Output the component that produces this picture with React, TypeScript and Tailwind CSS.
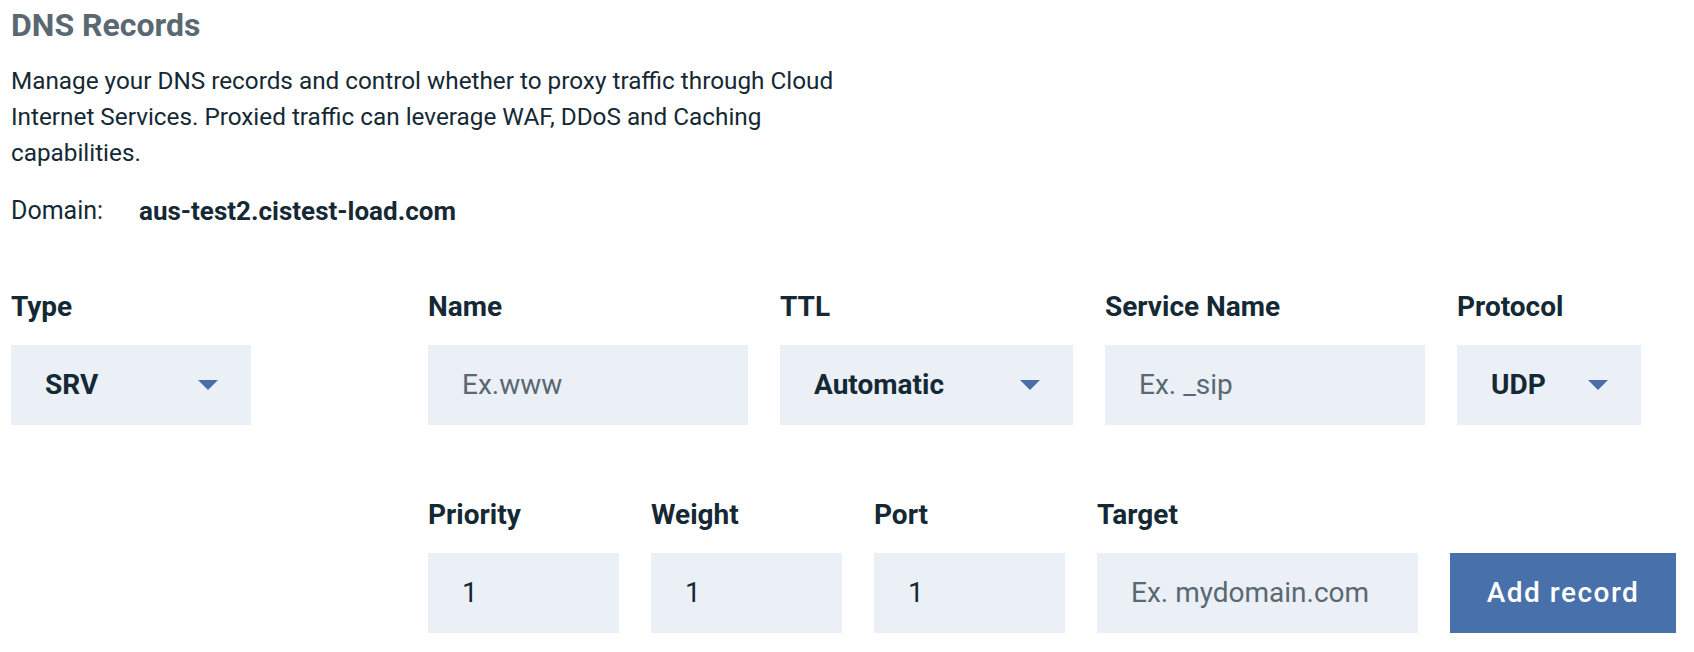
import React from "react";

const FONT = { fontFamily: "Roboto, 'Noto Sans', sans-serif" };

function Caret() {
  return (
    <svg width="20" height="10" viewBox="0 0 20 10" className="shrink-0">
      <path d="M0 0 L20 0 L10 10 Z" fill="#4a6fa8" />
    </svg>
  );
}

function Field({
  label,
  width,
  children,
}: {
  label: string;
  width: string;
  children: React.ReactNode;
}) {
  return (
    <div className={`flex flex-col ${width}`}>
      <label className="h-[32px] text-[28px] font-bold leading-[32px] text-[#152935]">
        {label}
      </label>
      <div className="mt-[22px] h-[80px]">{children}</div>
    </div>
  );
}

function Select({ value }: { value: string }) {
  return (
    <div className="flex h-full items-center justify-between bg-[#ebf0f7] pl-[34px] pr-[33px]">
      <span className="text-[28px] font-bold text-[#152935]">{value}</span>
      <Caret />
    </div>
  );
}

function Input({ value, placeholder }: { value?: string; placeholder?: string }) {
  return (
    <div className="flex h-full items-center bg-[#ebf0f7] pl-[34px]">
      {value ? (
        <span className="text-[28px] text-[#152935]">{value}</span>
      ) : (
        <span className="text-[28px] text-[#5a6872]">{placeholder}</span>
      )}
    </div>
  );
}

export default function App() {
  return (
    <div className="min-h-[652px] bg-white pl-[11px] pt-[5px]" style={FONT}>
      <h1 className="text-[32px] font-bold leading-[40px] text-[#5a6872]">DNS Records</h1>
      <p className="mt-[18px] w-[900px] text-[24.3px] leading-[36px] text-[#152935]">
        Manage your DNS records and control whether to proxy traffic through Cloud
        <br />
        Internet Services. Proxied traffic can leverage WAF, DDoS and Caching
        <br />
        capabilities.
      </p>
      <div className="mt-[22px] flex text-[25px] leading-[36px] text-[#152935]">
        <span className="w-[128px]">Domain:</span>
        <span className="text-[26px] font-bold">aus-test2.cistest-load.com</span>
      </div>

      <div className="mt-[62px] flex">
        <Field label="Type" width="w-[240px]">
          <Select value="SRV" />
        </Field>
        <div className="ml-[177px] flex gap-[32px]">
          <Field label="Name" width="w-[320px]">
            <Input placeholder="Ex.www" />
          </Field>
          <Field label="TTL" width="w-[293px]">
            <Select value="Automatic" />
          </Field>
          <Field label="Service Name" width="w-[320px]">
            <Input placeholder="Ex. _sip" />
          </Field>
          <Field label="Protocol" width="w-[184px]">
            <Select value="UDP" />
          </Field>
        </div>
      </div>

      <div className="mt-[74px] ml-[417px] flex gap-[32px]">
        <Field label="Priority" width="w-[191px]">
          <Input value="1" />
        </Field>
        <Field label="Weight" width="w-[191px]">
          <Input value="1" />
        </Field>
        <Field label="Port" width="w-[191px]">
          <Input value="1" />
        </Field>
        <Field label="Target" width="w-[321px]">
          <Input placeholder="Ex. mydomain.com" />
        </Field>
        <div className="flex flex-col">
          <div className="h-[32px]" />
          <button className="mt-[22px] h-[80px] w-[226px] bg-[#4870ab] text-[28px] font-medium tracking-[1.5px] text-white">
            Add record
          </button>
        </div>
      </div>
    </div>
  );
}
